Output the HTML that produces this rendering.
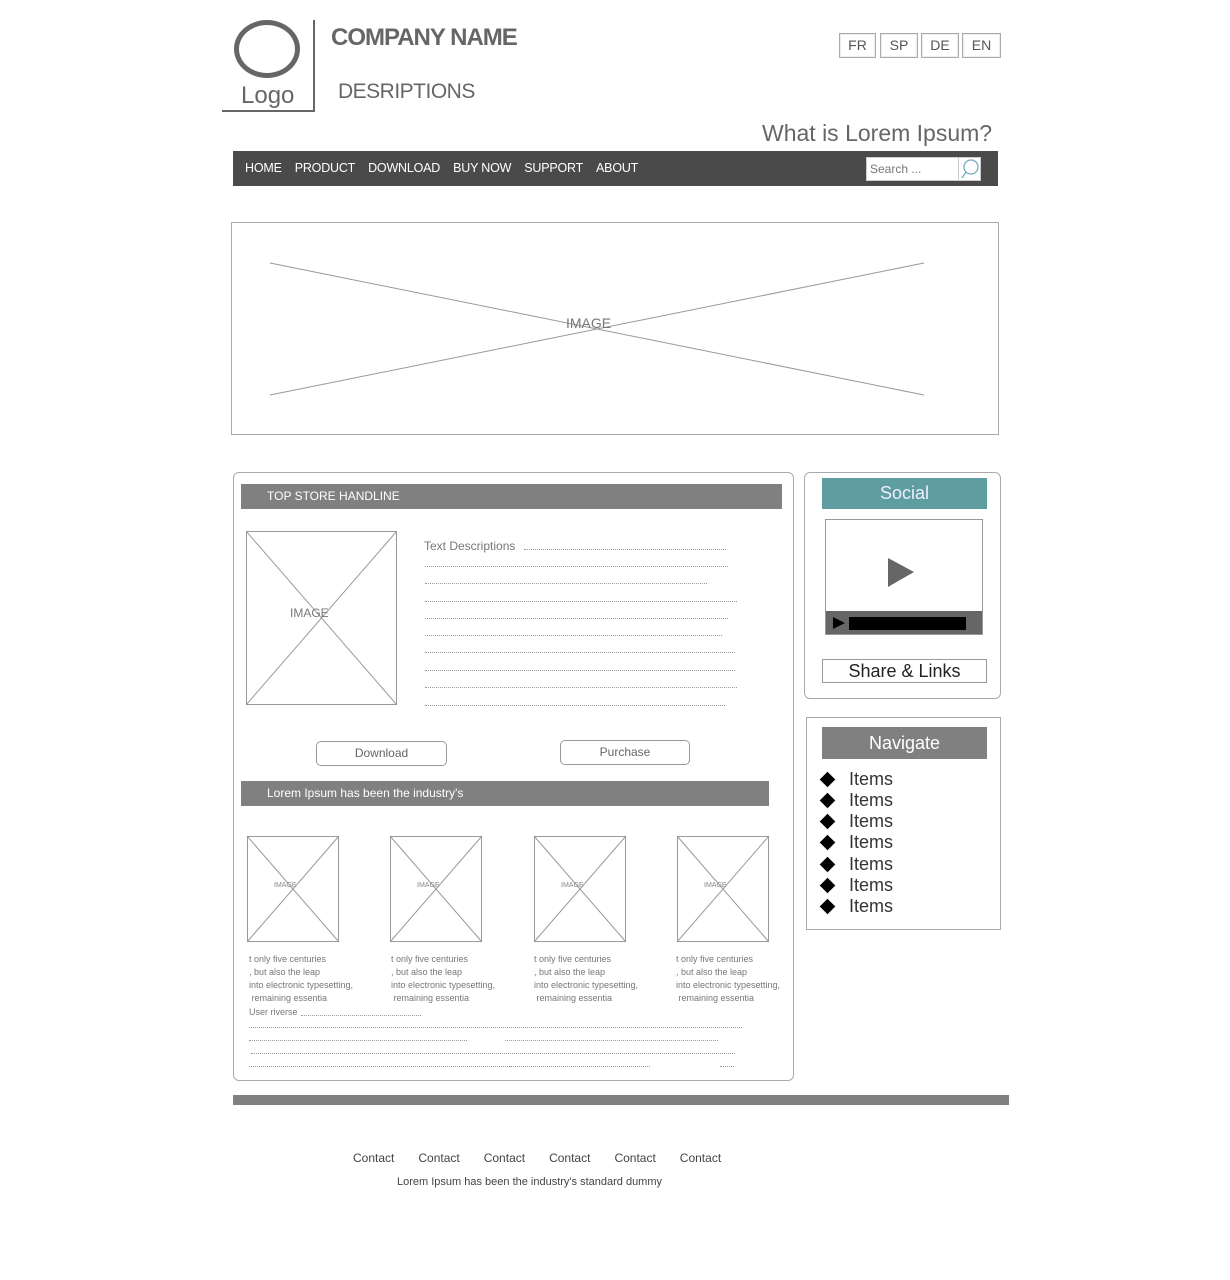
<!DOCTYPE html>
<html><head><meta charset="utf-8"><style>
*{margin:0;padding:0;box-sizing:border-box}
body{width:1230px;height:1280px;background:#fff;position:relative;font-family:"Liberation Sans",sans-serif;color:#555;overflow:hidden}
.a{position:absolute}
.lang{position:absolute;top:33px;height:25px;border:1px solid #aaa;font-size:14px;text-align:center;line-height:23px;color:#555;box-shadow:inset 0 0 0 1px #eee}
.nav span{margin-right:13px}
.dot{position:absolute;border-bottom:1px dotted #999;height:1px}
.sm{font-size:9px;color:#777;line-height:13px}
.item{position:absolute;left:821px;font-size:18px;color:#333}
.item:before{content:"";position:absolute;left:1px;top:5px;width:11px;height:11px;background:#000;transform:rotate(45deg)}
.item span{margin-left:28px}
</style></head><body>
<div class="a" style="left:234px;top:20px;width:66px;height:58px;border:5px solid #666;border-radius:50%"></div>
<div class="a" style="left:313px;top:20px;width:2px;height:92px;background:#666"></div>
<div class="a" style="left:222px;top:110px;width:93px;height:2px;background:#666"></div>
<div class="a" style="left:241px;top:82px;font-size:24px;color:#666">Logo</div>
<div class="a" style="left:331px;top:24px;font-size:24px;font-weight:bold;color:#666;letter-spacing:-1px">COMPANY NAME</div>
<div class="a" style="left:338px;top:80px;font-size:21px;color:#666;letter-spacing:-0.5px">DESRIPTIONS</div>
<div class="lang" style="left:839px;width:37px">FR</div>
<div class="lang" style="left:880px;width:38px">SP</div>
<div class="lang" style="left:921px;width:38px">DE</div>
<div class="lang" style="left:962px;width:39px">EN</div>
<div class="a" style="left:762px;top:120px;font-size:23px;color:#666">What is Lorem Ipsum?</div>
<div class="a nav" style="left:233px;top:151px;width:765px;height:35px;background:#4a4a4a;color:#fff;font-size:12.5px;letter-spacing:-0.2px;line-height:35px;padding-left:12px"><span>HOME</span><span>PRODUCT</span><span>DOWNLOAD</span><span>BUY NOW</span><span>SUPPORT</span><span>ABOUT</span></div>
<div class="a" style="left:866px;top:157px;width:115px;height:24px;background:#fff;border:1px solid #ccc;font-size:12px;color:#777;line-height:22px;padding-left:3px">Search ...</div>
<svg class="a" style="left:958px;top:157px" width="24" height="24"><line x1="0.5" y1="0" x2="0.5" y2="24" stroke="#ccc"/><circle cx="13" cy="10" r="7" fill="none" stroke="#7ab" stroke-width="1.3"/><line x1="8" y1="15" x2="4" y2="21" stroke="#7ab" stroke-width="1.3"/></svg>
<div class="a" style="left:231px;top:222px;width:768px;height:213px;border:1px solid #aaa"></div>
<svg class="a" style="left:231px;top:222px" width="768" height="213"><line x1="39" y1="41" x2="693" y2="173" stroke="#999"/><line x1="39" y1="173" x2="693" y2="41" stroke="#999"/></svg>
<div class="a" style="left:566px;top:315px;font-size:14px;color:#777">IMAGE</div>
<div class="a" style="left:233px;top:472px;width:561px;height:609px;border:1px solid #aaa;border-radius:6px"></div>
<div class="a" style="left:241px;top:484px;width:541px;height:25px;background:#808080;color:#fff;font-size:12px;line-height:25px;padding-left:26px">TOP STORE HANDLINE</div>
<div class="a" style="left:246px;top:531px;width:151px;height:174px;border:1px solid #999"></div>
<svg class="a" style="left:246px;top:531px" width="151" height="174"><line x1="0" y1="0" x2="151" y2="174" stroke="#999"/><line x1="0" y1="174" x2="151" y2="0" stroke="#999"/></svg>
<div class="a" style="left:290px;top:606px;font-size:12px;color:#777">IMAGE</div>
<div class="a" style="left:424px;top:539px;font-size:12px;color:#777">Text Descriptions</div>
<div class="dot" style="left:524px;top:549px;width:202px"></div>
<div class="dot" style="left:425px;top:566px;width:303px"></div>
<div class="dot" style="left:425px;top:583px;width:282px"></div>
<div class="dot" style="left:425px;top:601px;width:312px"></div>
<div class="dot" style="left:425px;top:618px;width:303px"></div>
<div class="dot" style="left:425px;top:635px;width:297px"></div>
<div class="dot" style="left:425px;top:652px;width:310px"></div>
<div class="dot" style="left:425px;top:670px;width:310px"></div>
<div class="dot" style="left:425px;top:687px;width:312px"></div>
<div class="dot" style="left:425px;top:705px;width:300px"></div>
<div class="a" style="left:316px;top:741px;width:131px;height:25px;border:1px solid #999;border-radius:5px;font-size:12px;text-align:center;line-height:23px;color:#666">Download</div>
<div class="a" style="left:560px;top:740px;width:130px;height:25px;border:1px solid #999;border-radius:5px;font-size:12px;text-align:center;line-height:23px;color:#666">Purchase</div>
<div class="a" style="left:241px;top:781px;width:528px;height:25px;background:#808080;color:#fff;font-size:12px;line-height:25px;padding-left:26px">Lorem Ipsum has been the industry's</div>
<svg class="a" style="left:0;top:0" width="1230" height="1280">
<g stroke="#999" fill="none">
<rect x="247.5" y="836.5" width="91" height="105"/><line x1="247" y1="836" x2="339" y2="942"/><line x1="247" y1="942" x2="339" y2="836"/>
<rect x="390.5" y="836.5" width="91" height="105"/><line x1="390" y1="836" x2="482" y2="942"/><line x1="390" y1="942" x2="482" y2="836"/>
<rect x="534.5" y="836.5" width="91" height="105"/><line x1="534" y1="836" x2="626" y2="942"/><line x1="534" y1="942" x2="626" y2="836"/>
<rect x="677.5" y="836.5" width="91" height="105"/><line x1="677" y1="836" x2="769" y2="942"/><line x1="677" y1="942" x2="769" y2="836"/>
</g></svg>
<div class="a" style="left:274px;top:882px;font-size:7px;color:#888">IMAGE</div>
<div class="a" style="left:417px;top:882px;font-size:7px;color:#888">IMAGE</div>
<div class="a" style="left:561px;top:882px;font-size:7px;color:#888">IMAGE</div>
<div class="a" style="left:704px;top:882px;font-size:7px;color:#888">IMAGE</div>
<div class="a sm" style="left:249px;top:953px">t only five centuries<br>, but also the leap<br>into electronic typesetting,<br>&nbsp;remaining essentia</div>
<div class="a sm" style="left:391px;top:953px">t only five centuries<br>, but also the leap<br>into electronic typesetting,<br>&nbsp;remaining essentia</div>
<div class="a sm" style="left:534px;top:953px">t only five centuries<br>, but also the leap<br>into electronic typesetting,<br>&nbsp;remaining essentia</div>
<div class="a sm" style="left:676px;top:953px">t only five centuries<br>, but also the leap<br>into electronic typesetting,<br>&nbsp;remaining essentia</div>
<div class="a sm" style="left:249px;top:1006px">User riverse</div>
<div class="dot" style="left:301px;top:1015px;width:120px"></div>
<div class="dot" style="left:249px;top:1027px;width:493px"></div>
<div class="dot" style="left:249px;top:1040px;width:218px"></div>
<div class="dot" style="left:505px;top:1040px;width:213px"></div>
<div class="dot" style="left:251px;top:1053px;width:484px"></div>
<div class="dot" style="left:249px;top:1066px;width:265px"></div>
<div class="dot" style="left:510px;top:1066px;width:140px"></div>
<div class="dot" style="left:720px;top:1066px;width:14px"></div>
<div class="a" style="left:804px;top:472px;width:197px;height:227px;border:1px solid #aaa;border-radius:6px"></div>
<div class="a" style="left:822px;top:478px;width:165px;height:31px;background:#5f9ea0;color:#eef;font-size:18px;text-align:center;line-height:31px">Social</div>
<div class="a" style="left:825px;top:519px;width:158px;height:116px;border:1px solid #999"></div>
<div class="a" style="left:826px;top:611px;width:156px;height:23px;background:#666"></div>
<div class="a" style="left:849px;top:617px;width:117px;height:13px;background:#000"></div>
<svg class="a" style="left:832px;top:616px" width="14" height="14"><polygon points="1,1 13,7 1,13" fill="#000"/></svg>
<svg class="a" style="left:886px;top:556px" width="30" height="34"><polygon points="2,2 28,16 2,31" fill="#666"/></svg>
<div class="a" style="left:822px;top:659px;width:165px;height:24px;border:1px solid #999;font-size:18px;text-align:center;line-height:22px;color:#222">Share &amp; Links</div>
<div class="a" style="left:806px;top:717px;width:195px;height:213px;border:1px solid #aaa"></div>
<div class="a" style="left:822px;top:727px;width:165px;height:32px;background:#808080;color:#fff;font-size:18px;text-align:center;line-height:32px">Navigate</div>
<div class="item" style="top:769px"><span>Items</span></div>
<div class="item" style="top:790px"><span>Items</span></div>
<div class="item" style="top:811px"><span>Items</span></div>
<div class="item" style="top:832px"><span>Items</span></div>
<div class="item" style="top:854px"><span>Items</span></div>
<div class="item" style="top:875px"><span>Items</span></div>
<div class="item" style="top:896px"><span>Items</span></div>
<div class="a" style="left:233px;top:1095px;width:776px;height:10px;background:#808080"></div>
<div class="a" style="left:353px;top:1151px;font-size:12px;color:#444"><span style="margin-right:24px">Contact</span><span style="margin-right:24px">Contact</span><span style="margin-right:24px">Contact</span><span style="margin-right:24px">Contact</span><span style="margin-right:24px">Contact</span><span>Contact</span></div>
<div class="a" style="left:397px;top:1176px;font-size:11px;color:#444">Lorem Ipsum has been the industry's standard dummy</div>
</body></html>
